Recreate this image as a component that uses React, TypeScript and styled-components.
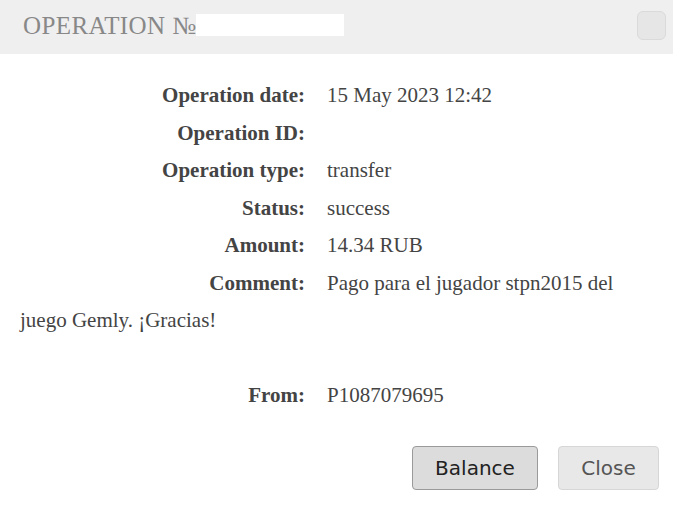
import React from "react";
import styled, { createGlobalStyle } from "styled-components";

const Global = createGlobalStyle`
  html, body { margin: 0; padding: 0; background: #fff; }
  body { width: 673px; height: 505px; overflow: hidden; }
`;

const Dialog = styled.div`
  width: 673px;
  height: 505px;
  display: flex;
  flex-direction: column;
  background: #fff;
  font-family: "Liberation Serif", "Times New Roman", serif;
`;

const Header = styled.div`
  height: 54px;
  background: #efefef;
  display: flex;
  align-items: center;
  padding: 0 7px 0 23px;
  box-sizing: border-box;
`;

const Title = styled.div`
  flex: 1;
  display: flex;
  align-items: center;
  font-size: 25px;
  color: #888;
  letter-spacing: 0.4px;
  margin-top: -2px;
`;

const Redacted = styled.span`
  display: inline-block;
  width: 148px;
  height: 22px;
  background: #fff;
  margin-top: -2px;
`;

const CloseBox = styled.button`
  width: 29px;
  height: 29px;
  border-radius: 6px;
  border: 1px solid #dadada;
  background: #e6e6e6;
  padding: 0;
  margin-top: -4px;
`;

const Body = styled.div`
  flex: 1;
  padding: 23px 20px 0 20px;
  font-size: 21px;
  color: #444;
  line-height: 37.5px;
`;

const Row = styled.div<{ $gapAfter?: number }>`
  margin-bottom: ${(p) => p.$gapAfter ?? 0}px;
`;

const Label = styled.span`
  display: inline-block;
  width: 285px;
  text-align: right;
  font-weight: bold;
  margin-right: 22px;
`;

const Footer = styled.div`
  display: flex;
  justify-content: flex-end;
  gap: 20px;
  padding: 0 14px 15px 0;
`;

const Btn = styled.button<{ $primary?: boolean; $w: number }>`
  width: ${(p) => p.$w}px;
  height: 44px;
  padding: 0;
  font-family: "DejaVu Sans", Verdana, sans-serif;
  font-size: 20px;
  border-radius: 4px;
  border: 1px solid ${(p) => (p.$primary ? "#9a9a9a" : "#d6d6d6")};
  background: ${(p) => (p.$primary ? "#dcdcdc" : "#e8e8e8")};
  color: ${(p) => (p.$primary ? "#222" : "#555")};
`;

export default function App() {
  return (
    <>
      <Global />
      <Dialog>
        <Header>
          <Title>
            OPERATION №<Redacted />
          </Title>
          <CloseBox aria-label="close" />
        </Header>
        <Body>
          <Row>
            <Label>Operation date:</Label>15 May 2023 12:42
          </Row>
          <Row>
            <Label>Operation ID:</Label>
          </Row>
          <Row>
            <Label>Operation type:</Label>transfer
          </Row>
          <Row>
            <Label>Status:</Label>success
          </Row>
          <Row>
            <Label>Amount:</Label>14.34 RUB
          </Row>
          <Row $gapAfter={37}>
            <Label>Comment:</Label>Pago para el jugador stpn2015 del juego Gemly. ¡Gracias!
          </Row>
          <Row>
            <Label>From:</Label>P1087079695
          </Row>
        </Body>
        <Footer>
          <Btn $primary $w={126}>Balance</Btn>
          <Btn $w={101}>Close</Btn>
        </Footer>
      </Dialog>
    </>
  );
}
